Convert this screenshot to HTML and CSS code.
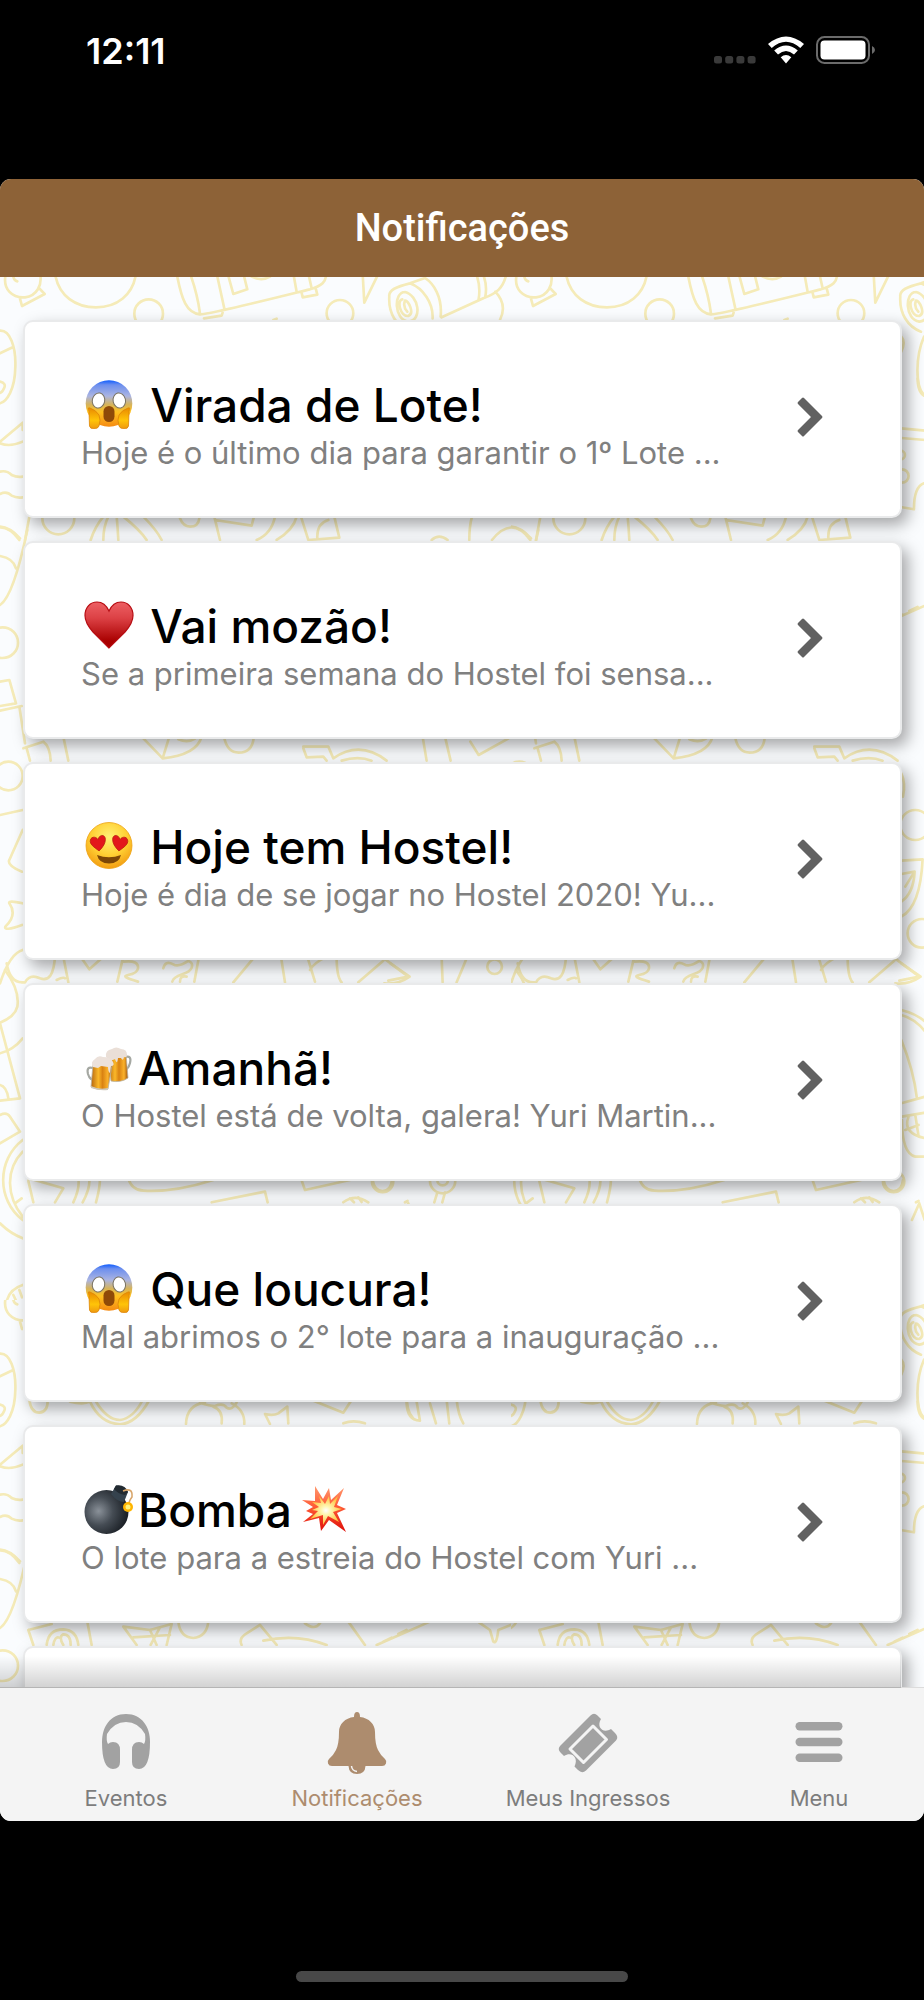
FILE: index.html
```html
<!DOCTYPE html>
<html lang="pt-BR">
<head>
<meta charset="utf-8">
<meta name="viewport" content="width=device-width, initial-scale=1">
<title>Notificações</title>
<link rel="stylesheet" href="styles.css">
</head>
<body>
<div class="status">
  <time class="clock">12:11</time>
  <div class="indicators">
    <svg class="signal" viewBox="0 0 42 28" aria-hidden="true"><g fill="#3a3a3a"><rect x="0" y="20" width="8" height="7.5" rx="2.5"/><rect x="11.2" y="20" width="8" height="7.5" rx="2.5"/><rect x="22.4" y="20" width="8" height="7.5" rx="2.5"/><rect x="33.6" y="20" width="8" height="7.5" rx="2.5"/></g></svg>
    <svg class="wifi" viewBox="0 0 36 28" aria-hidden="true"><path fill="#fff" d="M0 8Q18-7 36 8L32.300 12Q18-.7 3.700 12ZM6.200 14.500Q18 4.500 29.800 14.500L26 18.500Q18 11.500 10 18.500ZM12.700 21.200Q18 17 23.300 21.200L18 27.500Z"/></svg>
    <svg class="battery" viewBox="0 0 60 28" aria-hidden="true"><rect x="1" y="1" width="52" height="26" rx="7.500" fill="none" stroke="#6b6b6b" stroke-width="2"/><rect x="4.500" y="4.500" width="45" height="19" rx="4" fill="#fff"/><path d="M56 10q3 1.500 3 4t-3 4z" fill="#6b6b6b"/></svg>
  </div>
</div>

<div class="app">
  <header class="header"><h1 class="heading">Notificações</h1></header>

  <main class="content">
    <svg class="doodles" aria-hidden="true">
      <defs>
        <pattern id="party" width="511" height="1023" patternUnits="userSpaceOnUse">
          <g transform="translate(0 -277)" fill="none" stroke="#f5ebb8" stroke-width="8" stroke-linecap="round" stroke-linejoin="round">
            <g transform="translate(0 270) scale(.3333)">
              <path d="M18 10C5 60 40 85 75 82C110 78 128 45 120 10M40 20q2 12 12 14M118 55L134 72L66 108L60 86M165 10C175 80 230 112 288 112C350 112 400 75 408 10"/>
              <circle cx="446" cy="131" r="43"/><circle cx="1020" cy="130" r="40"/>
              <path d="M530 10C545 90 560 130 600 133C625 135 900 65 930 58C965 48 980 35 978 10M570 10Q592 70 600 130M650 10L674 120M612 145L665 137L668 128M683 10L700 72L742 58L730 10M755 20q30 15 55 0M880 10L890 65M925 10L935 55M905 68L908 82L952 74L948 58M820 150l10-4"/>
              <path d="M1088 10L1093 98L1136 10M1168 80C1165 60 1190 50 1230 40L1275 24C1300 40 1328 80 1322 140M1230 40C1270 55 1300 100 1298 145M1168 80C1165 130 1190 170 1230 185M1215 66C1180 66 1182 150 1225 155C1270 150 1255 75 1215 66M1207 88C1190 90 1200 140 1225 138C1245 130 1225 90 1215 92Q1208 110 1222 125M1325 142L1450 85C1490 70 1510 55 1520 10M1428 10q15 38 8 78M1448 10q15 34 8 70M1486 65C1510 90 1515 120 1500 150"/>
              <path d="M0 182C30 180 48 230 46 290C45 360 20 395 0 400M0 250L38 232M0 335q20 5 12 20q-5 12-12 14M0 515L68 458V480M0 520q30 12 68-5M0 605q20-5 35 10q15 8 33 5M0 672q20-10 35 5q15 8 33 5M0 770q30 2 60 35"/>
              <circle cx="175" cy="745" r="48"/>
              <path d="M272 810Q285 770 310 740M325 740q-15 30-15 70M350 740q3 30 5 70M370 740Q420 780 440 810M430 740Q470 780 485 810M540 745q10 25 30 25q25 0 28-25M643 740L660 810M645 750L755 767L762 740M825 740q-10 50-55 70M830 810Q880 780 890 740M903 740L925 810L1018 803L1003 740M952 805Q950 760 985 750M1416 740q-8 30-8 70M1476 810Q1536 735 1591 810M-57 810Q3 735 58 810M88 740L75 810"/>
            </g>
            <g transform="translate(-49 270) scale(.3333)">
              <path d="M1318 200q14 15 0 45M1386 200C1360 260 1360 350 1386 375M1318 475L1390 482M1318 504L1390 510M1386 640q-30 10-30 78L1320 712"/>
              <circle cx="1316" cy="555" r="13"/><circle cx="1320" cy="618" r="20"/>
            </g>
            <g transform="translate(0 530) scale(.3333)">
              <path d="M0 78Q40 85 48 115M82 0Q40 200 0 225M0 455L28 450L48 520L0 528M65 528L0 542M58 530L75 640"/>
              <circle cx="8" cy="338" r="46"/>
              <path d="M70 655L130 635Q150 650 152 692M80 655L90 692M190 620L205 692M425 620L488 685L508 620M488 685Q590 675 605 620M535 628q28 12 50-2M673 625q10 43 43 43q40 0 45-43M910 650L985 650L1000 685Q1080 630 1160 692M910 655L920 682L970 680L980 692M1025 692q50-15 90 0M1268 620L1280 692M1335 620L1352 692M1295 30q22-20 48 0M1411 635L1436 675L1526 625"/>
            </g>
            <g transform="translate(0 750) scale(.3333)">
              <circle cx="25" cy="78" r="43"/><circle cx="1484" cy="650" r="22"/>
              <path d="M0 195L68 180M68 240L28 330Q20 345 66 365M68 460q-45-10-40 0q25 35-12 70q-5 15 50-5M68 600Q30 610 0 700M20 640Q30 700 70 697M165 620Q160 700 120 685Q90 670 75 697M190 620L205 697M170 690q20-10 25-5M245 625L268 658L305 625M370 620L352 695M372 635q45-5 42 20q-2 15-30 20q-25 5 30 20M490 655q5-25 30-12q15 10 45-10q15 5 10 20q-5 12-28 20q-28 10-30 22M540 695q0-20 20-15M597 620L583 695M760 625L700 697M843 620L855 697M922 620L945 695M980 620Q940 640 930 660M1010 620Q1010 680 1025 697M1145 620L1225 680L1165 692M1150 632L1075 697M1325 620L1328 697M1370 697Q1386 660 1400 625"/>
            </g>
            <g transform="translate(-49 720) scale(.3333)">
              <path d="M1318 160q14 30 5 70M1318 422L1382 418Q1375 560 1318 590M1318 462L1358 455Q1355 520 1318 545M1330 500L1358 455M1318 730L1376 770Q1340 795 1300 790M1318 870Q1360 880 1390 905M1318 885q40 10 72 50M1318 960Q1355 1050 1365 1135M1318 1150L1390 1130M1320 1190L1390 1178M1320 1200Q1320 1300 1360 1310L1390 1310M1340 1190Q1320 1240 1390 1255M1330 1230L1370 1215M1360 1185L1370 1250M1350 1500L1372 1450L1388 1500"/>
              <circle cx="1360" cy="315" r="45"/><circle cx="1380" cy="640" r="43"/><circle cx="1295" cy="1385" r="32"/>
            </g>
            <g transform="translate(0 970) scale(.3333)">
              <path d="M15 0Q60 60 52 110Q45 140 0 158M0 160L60 385L0 392M0 250Q40 240 68 205M0 345q20 5 25 40M0 435Q20 425 30 440L60 485L0 520M68 510C-10 570-10 690 68 750M68 545C15 600 20 680 68 740M0 760Q30 790 68 805M85 625L190 655L165 697M85 633L100 697M45 700l20-15M235 625q5 30-15 72M268 625q3 30-20 72M300 625q0 30-12 72M385 625Q395 660 430 662Q520 668 640 630M635 697L795 665L803 697M903 625L915 660L1050 630M1118 630q5 33 30 33q25 0 28-33M1312 668L1303 697M1335 668L1327 697M1030 697Q1065 670 1105 697M1050 685l12 12M1075 682l10 14M1215 697l8-4"/>
              <circle cx="1328" cy="632" r="38"/><circle cx="1328" cy="630" r="16"/>
            </g>
            <g transform="translate(0 1180) scale(.3333)">
              <path d="M68 315Q20 330 18 380Q20 415 68 420M40 345l12 25M58 330l8 22M65 420v28"/>
            </g>
            <g transform="translate(0 377) scale(.3333)">
              <path d="M88 0q5 38 30 38q25-2 25-35M210 5q40 10 60 0Q300 70 360 73Q410 70 448 0M285 0Q320 60 360 60Q400 55 428 0M615 8Q560 15 558 72M640 20q30 10 25 50M600 8q30 10 45 10q25-10 35 5q15 10 30-15M695 10Q735 30 733 72M810 72L795 42Q820 48 835 40L862 20L865 70M935 0L1030 38L1055 0M1030 70q30-12 65 0M1220 5Q1220 60 1260 62L1250 5M1290 10L1308 70M1340 0L1348 70M1370 0q5 45 20 70"/>
              <path d="M85 690L155 672M85 690L100 735M262 665L275 735M140 735Q145 688 190 688Q230 690 235 735M160 735q5-28 18-22M190 735q-15-25 0-32q22 0 22 32M370 680L410 735M370 680L450 690L515 672L500 735M450 690L470 735M480 682l-28 53M400 712L510 705M535 665q5 47 45 49q40-3 45-49M725 735Q715 715 740 700L780 675L830 735M790 722Q890 700 980 735M915 670q30 22 45 0M1045 665L1095 735M1130 735L1290 665M1150 725l25-12M1195 702l25-12M1438 668L1470 690L1480 725Q1490 735 1495 690L1550 668"/>
            </g>
          </g>
        </pattern>
        <linearGradient id="fear" x1="0" y1="0" x2="0" y2="1"><stop offset="0" stop-color="#0d5cff"/><stop offset=".1" stop-color="#6d8fee"/><stop offset=".34" stop-color="#aab4e2"/><stop offset=".52" stop-color="#d5b35c"/><stop offset=".68" stop-color="#ffc220"/><stop offset="1" stop-color="#f58a12"/></linearGradient>
        <linearGradient id="hand" x1="0" y1="0" x2="0" y2="1"><stop offset="0" stop-color="#e98a00"/><stop offset=".6" stop-color="#ffc408"/><stop offset="1" stop-color="#ef9a10"/></linearGradient>
        <linearGradient id="red" x1="0" y1="0" x2="0" y2="1"><stop offset="0" stop-color="#ed6064"/><stop offset=".35" stop-color="#dc4145"/><stop offset=".85" stop-color="#a90000"/></linearGradient>
        <radialGradient id="sun" cx=".5" cy=".32" r=".7"><stop offset="0" stop-color="#fff176"/><stop offset=".55" stop-color="#ffd034"/><stop offset="1" stop-color="#f29a10"/></radialGradient>
        <linearGradient id="beer" x1="0" y1="0" x2="1" y2="0"><stop offset="0" stop-color="#b5650f"/><stop offset=".35" stop-color="#fbb829"/><stop offset=".55" stop-color="#d98212"/><stop offset=".8" stop-color="#fbb22a"/><stop offset="1" stop-color="#9c500c"/></linearGradient>
        <radialGradient id="iron" cx=".32" cy=".48" r=".65"><stop offset="0" stop-color="#8a9199"/><stop offset=".5" stop-color="#454c54"/><stop offset="1" stop-color="#1c2127"/></radialGradient>
        <linearGradient id="blast" x1="0" y1="0" x2="0" y2="1"><stop offset="0" stop-color="#ff9a70"/><stop offset=".45" stop-color="#ff5a35"/><stop offset="1" stop-color="#de0d08"/></linearGradient>
        <radialGradient id="flash"><stop offset="0" stop-color="#fff"/><stop offset=".3" stop-color="#fff6b0"/><stop offset="1" stop-color="#ffc13a"/></radialGradient>
        <symbol id="scream" viewBox="0 0 57 54">
          <circle cx="28" cy="26.500" r="23.300" fill="url(#fear)"/>
          <g fill="#fff" stroke="#77705f" stroke-width="1"><ellipse cx="17.500" cy="23.500" rx="6.200" ry="7.600" transform="rotate(12 17.500 23.500)"/><ellipse cx="38.300" cy="23.500" rx="6.200" ry="7.600" transform="rotate(-12 38.300 23.500)"/></g>
          <rect x="22.500" y="29" width="11" height="16" rx="5.500" fill="#8f4a08"/>
          <g fill="url(#hand)" stroke="#dd8508" stroke-width=".8"><path d="M8 34Q6 30 9 31Q15 33 18 38Q20 43 18 49Q17 52 13 51.500Q9 52 8.500 49Z"/><path d="M48 34Q50 30 47 31Q41 33 38 38Q36 43 38 49Q39 52 43 51.500Q47 52 47.500 49Z"/></g>
        </symbol>
        <symbol id="heart" viewBox="0 0 57 54"><path d="M28 50Q24 46 12 34Q4 25 4 17.500C4 9 9.500 4 16 4Q24 4 28 13Q32 4 40 4C46.500 4 52 9 52 17.500Q52 25 44 34Q32 46 28 50Z" fill="url(#red)" stroke="#b70c12" stroke-width="1.200"/></symbol>
        <symbol id="love" viewBox="0 0 57 54">
          <circle cx="28" cy="26.500" r="23" fill="url(#sun)" stroke="#eda211" stroke-width=".8"/>
          <path d="M17 32Q9 25 9.500 21.500C10 16.500 15.500 16.500 17.500 20.500C20 15 25.500 16.500 24.800 21.500Q24 27 17 32Z" fill="#e3161b" stroke="#b5180b" stroke-width=".7" transform="rotate(-8 17 24)"/>
          <path d="M39 32Q47 25 46.500 21.500C46 16.500 40.500 16.500 38.500 20.500C36 15 30.500 16.500 31.200 21.500Q32 27 39 32Z" fill="#e3161b" stroke="#b5180b" stroke-width=".7" transform="rotate(8 39 24)"/>
          <path d="M16 36Q28 40.500 40 36Q38 44.500 28 44.500T16 36Z" fill="#7d4706"/>
        </symbol>
        <symbol id="mugs" viewBox="0 0 57 54">
          <path d="M44 17Q51 15 49 23Q47 31 42 29" fill="none" stroke="#a5a8a2" stroke-width="2.200"/>
          <path d="M27 15L45 14L47 38Q40 43 30 41Z" fill="url(#beer)" stroke="#b9b2a2" stroke-width=".8"/>
          <path d="M25 17Q24 10 31 9Q35 6 40 9Q46 9 46 15Q46 18 43 17Q42 22 40 18L37 18Q36 26 34 19Q30 22 25 17Z" fill="#eadfd7"/>
          <path d="M12 28Q5 26 7 34Q9 41 14 39" fill="none" stroke="#a5a8a2" stroke-width="2.200"/>
          <path d="M12 24L31 25L27 49Q18 51 10 47Z" fill="url(#beer)" stroke="#b9b2a2" stroke-width=".8"/>
          <path d="M10 46Q18 50 27 48L27 50Q18 51 10 48Z" fill="#cfc8ba"/>
          <path d="M12 27Q9 22 14 19Q17 15 22 17Q30 17 32 22Q34 26 30 26L29 33Q27 32 27 27L20 26L17 28Z" fill="#ece1da"/>
        </symbol>
        <symbol id="bomb" viewBox="0 0 57 54">
          <circle cx="25.500" cy="30" r="22" fill="url(#iron)"/>
          <path d="M35 3.500Q42 3 47 10L43 20Q36 20 30 12Z" fill="#35424d"/><path d="M35 3.500Q44 2 47 10L44 13Q37 12 33 7Z" fill="#222a31"/>
          <path d="M42 9Q52 5 51 15Q47 20 48 25" fill="none" stroke="#d8a66b" stroke-width="1.600"/>
          <circle cx="47" cy="25" r="5" fill="#ffb500"/><circle cx="47" cy="25" r="2.500" fill="#fff37b"/>
        </symbol>
        <symbol id="boom" viewBox="0 0 57 54">
          <path d="M23 4L31 17L37 6L39 18L52 6L45 23L54 27L45 31L54 50L37 38L29 49L27 36L11 40L21 32L14 29L21 25L10 18L23 19Z" fill="url(#blast)"/>
          <path d="M27 14L33 22L37 14L38 22L46 14L42 25L50 27L41 30L47 40L36 34L31 43L31 33L18 37L26 29L20 28L27 25L20 20L29 21Z" fill="url(#flash)"/>
        </symbol>
        <symbol id="chevron" viewBox="0 0 26 40"><path d="M7 1L25 19Q26 20 25 21L7 39Q6 40 5 39L1 35Q0 34 1 33L14 20L1 7Q0 6 1 5L5 1Q6 0 7 1Z" fill="#616161"/></symbol>
      </defs>
      <rect width="100%" height="100%" fill="url(#party)"/>
    </svg>

    <ul class="list">
      <li><a class="card" href="#n1"><span class="message"><strong class="title"><svg class="emoji" role="img" aria-label="😱"><use href="#scream"/></svg> Virada de Lote!</strong><span class="summary">Hoje é o último dia para garantir o 1º Lote ...</span></span><svg class="chevron" aria-hidden="true"><use href="#chevron"/></svg></a></li>
      <li><a class="card" href="#n2"><span class="message"><strong class="title"><svg class="emoji" role="img" aria-label="♥️"><use href="#heart"/></svg> Vai mozão!</strong><span class="summary">Se a primeira semana do Hostel foi sensa...</span></span><svg class="chevron" aria-hidden="true"><use href="#chevron"/></svg></a></li>
      <li><a class="card" href="#n3"><span class="message"><strong class="title"><svg class="emoji" role="img" aria-label="😍"><use href="#love"/></svg> Hoje tem Hostel!</strong><span class="summary">Hoje é dia de se jogar no Hostel 2020! Yu...</span></span><svg class="chevron" aria-hidden="true"><use href="#chevron"/></svg></a></li>
      <li><a class="card" href="#n4"><span class="message"><strong class="title"><svg class="emoji" role="img" aria-label="🍻"><use href="#mugs"/></svg>Amanhã!</strong><span class="summary">O Hostel está de volta, galera! Yuri Martin...</span></span><svg class="chevron" aria-hidden="true"><use href="#chevron"/></svg></a></li>
      <li><a class="card" href="#n5"><span class="message"><strong class="title"><svg class="emoji" role="img" aria-label="😱"><use href="#scream"/></svg> Que loucura!</strong><span class="summary">Mal abrimos o 2° lote para a inauguração ...</span></span><svg class="chevron" aria-hidden="true"><use href="#chevron"/></svg></a></li>
      <li><a class="card" href="#n6"><span class="message"><strong class="title"><svg class="emoji" role="img" aria-label="💣"><use href="#bomb"/></svg>Bomba<svg class="emoji" role="img" aria-label="💥"><use href="#boom"/></svg></strong><span class="summary">O lote para a estreia do Hostel com Yuri ...</span></span><svg class="chevron" aria-hidden="true"><use href="#chevron"/></svg></a></li>
      <li><div class="card card-next"></div></li>
    </ul>
  </main>

  <nav class="tabs">
    <a class="tab" href="#eventos"><svg class="tab-icon" viewBox="0 0 64 64" aria-hidden="true"><path fill="currentColor" d="M32 4C16 4 8 17 8 32Q8 59 19 59Q26 59 26 52V40Q26 32 19 32Q16 32 14 34Q12 31 13 24Q20 12 32 12T51 24Q52 31 50 34Q48 32 45 32Q38 32 38 40V52Q38 59 45 59Q56 59 56 32C56 17 48 4 32 4Z"/></svg><span>Eventos</span></a>
    <a class="tab tab-active" href="#notificacoes" aria-current="page"><svg class="tab-icon" viewBox="0 0 64 64" aria-hidden="true"><path fill="currentColor" d="M32 2Q35 2 35 7C44 8 50 14 50 22Q50 34 53 40T60 49Q62 51 61 53.500Q60 56 57 56H40.500Q40 64 32 64T23.500 56H7Q4 56 3 53.500Q2 51 4 49Q8 46 11 40T14 22C14 14 20 8 29 7Q29 2 32 2Z"/><path d="M26.500 56Q27 61 32 61.500" fill="none" stroke="#f4f4f4" stroke-width="1.500"/></svg><span>Notificações</span></a>
    <a class="tab" href="#ingressos"><svg class="tab-icon" viewBox="0 0 64 64" aria-hidden="true"><path fill="currentColor" d="M34.500 5.500Q38 2 41.500 5.500L45 9C40 17 47 24 55 19L59 23Q63 27 60 30.500L30 60.500Q26 64 22 60L18.500 56.500C23 48 16 41 8 46L4.500 42.500Q1 39 4.500 35.500Z"/><path fill="none" stroke="#f4f4f4" stroke-width="3" stroke-linejoin="round" d="M37 16L50.500 29.500L27.500 52.500L14 39Z"/></svg><span>Meus Ingressos</span></a>
    <a class="tab" href="#menu"><svg class="tab-icon" viewBox="0 0 64 64" aria-hidden="true"><g fill="currentColor"><rect x="8.500" y="12" width="47" height="8.500" rx="4.200"/><rect x="8.500" y="27.700" width="47" height="8.500" rx="4.200"/><rect x="8.500" y="43.500" width="47" height="8.500" rx="4.200"/></g></svg><span>Menu</span></a>
  </nav>
</div>

<div class="home"><span class="home-bar"></span></div>
</body>
</html>
```
FILE: styles.css
```css
*, *::before { box-sizing: border-box; }

body {
  margin: 0;
  height: 100vh;
  display: flex;
  flex-direction: column;
  background: #000;
  font-family: Inter, "Liberation Sans", sans-serif;
  overflow: hidden;
}

.status {
  display: flex;
  justify-content: space-between;
  align-items: flex-start;
  height: 179px;
  padding: 28px 48px 0 86px;
  color: #fff;
}
.clock { font-size: 36px; line-height: 46px; font-weight: 600; }
.indicators { display: flex; gap: 12px; padding-top: 8px; }
.signal { width: 42px; height: 28px; }
.wifi { width: 36px; height: 28px; }
.battery { width: 60px; height: 28px; }

.app {
  flex: 1;
  min-height: 0;
  display: flex;
  flex-direction: column;
  border-radius: 11px;
  overflow: hidden;
  background: #fafcfe;
}

.header {
  display: flex;
  align-items: center;
  justify-content: center;
  height: 98px;
  background: #8d6237;
}
.heading {
  margin: 0;
  color: #fff;
  font: 500 38px/46px Roboto, sans-serif;
}

.content { position: relative; flex: 1; min-height: 0; overflow: hidden; }
.doodles { position: absolute; inset: 0; width: 100%; height: 100%; }

.list {
  position: relative;
  margin: 0;
  padding: 43px 22px 44px 23px;
  list-style: none;
  display: grid;
  gap: 23px;
}
.card {
  display: flex;
  align-items: center;
  justify-content: space-between;
  padding: 0 77px 0 56px;
  border: 2px solid #e9eaeb;
  border-radius: 10px;
  background: #fff;
  box-shadow: 6px 7px 16px rgba(0, 0, 0, .34);
  color: #000;
  text-decoration: none;
}
.card-next { height: 198px; }
.message { display: block; padding: 55px 0 43px; }
.title {
  display: block;
  font-size: 46px;
  line-height: 56px;
  font-weight: 500;
  white-space: nowrap;
}
.summary {
  display: block;
  color: #808080;
  font-size: 31px;
  line-height: 40px;
  white-space: nowrap;
}
.emoji { width: 57px; height: 54px; vertical-align: -9px; }
.chevron { flex: none; width: 26px; height: 40px; margin-bottom: 5px; }

.tabs {
  position: relative;
  display: grid;
  grid-template-columns: repeat(4, 1fr);
  border-top: 1px solid #dcdcdc;
  background: #f4f4f4;
}
.tabs::before {
  content: "";
  position: absolute;
  left: 0;
  right: 23px;
  bottom: 100%;
  height: 32px;
  background: linear-gradient(rgba(0, 0, 0, 0), rgba(0, 0, 0, .18));
}
.tab {
  display: flex;
  flex-direction: column;
  align-items: center;
  gap: 10px;
  padding: 22px 0 9px 21px;
  color: #a2a2a2;
  font-size: 22px;
  line-height: 28px;
  text-decoration: none;
}
.tab span { color: #7d7d7d; }
.tab-active, .tab-active span { color: #ad8c6e; }
.tab-icon { width: 64px; height: 64px; }

.home {
  display: flex;
  justify-content: center;
  align-items: flex-end;
  height: 179px;
  padding-bottom: 18px;
}
.home-bar { width: 36%; height: 11px; border-radius: 6px; background: #484848; }
```
